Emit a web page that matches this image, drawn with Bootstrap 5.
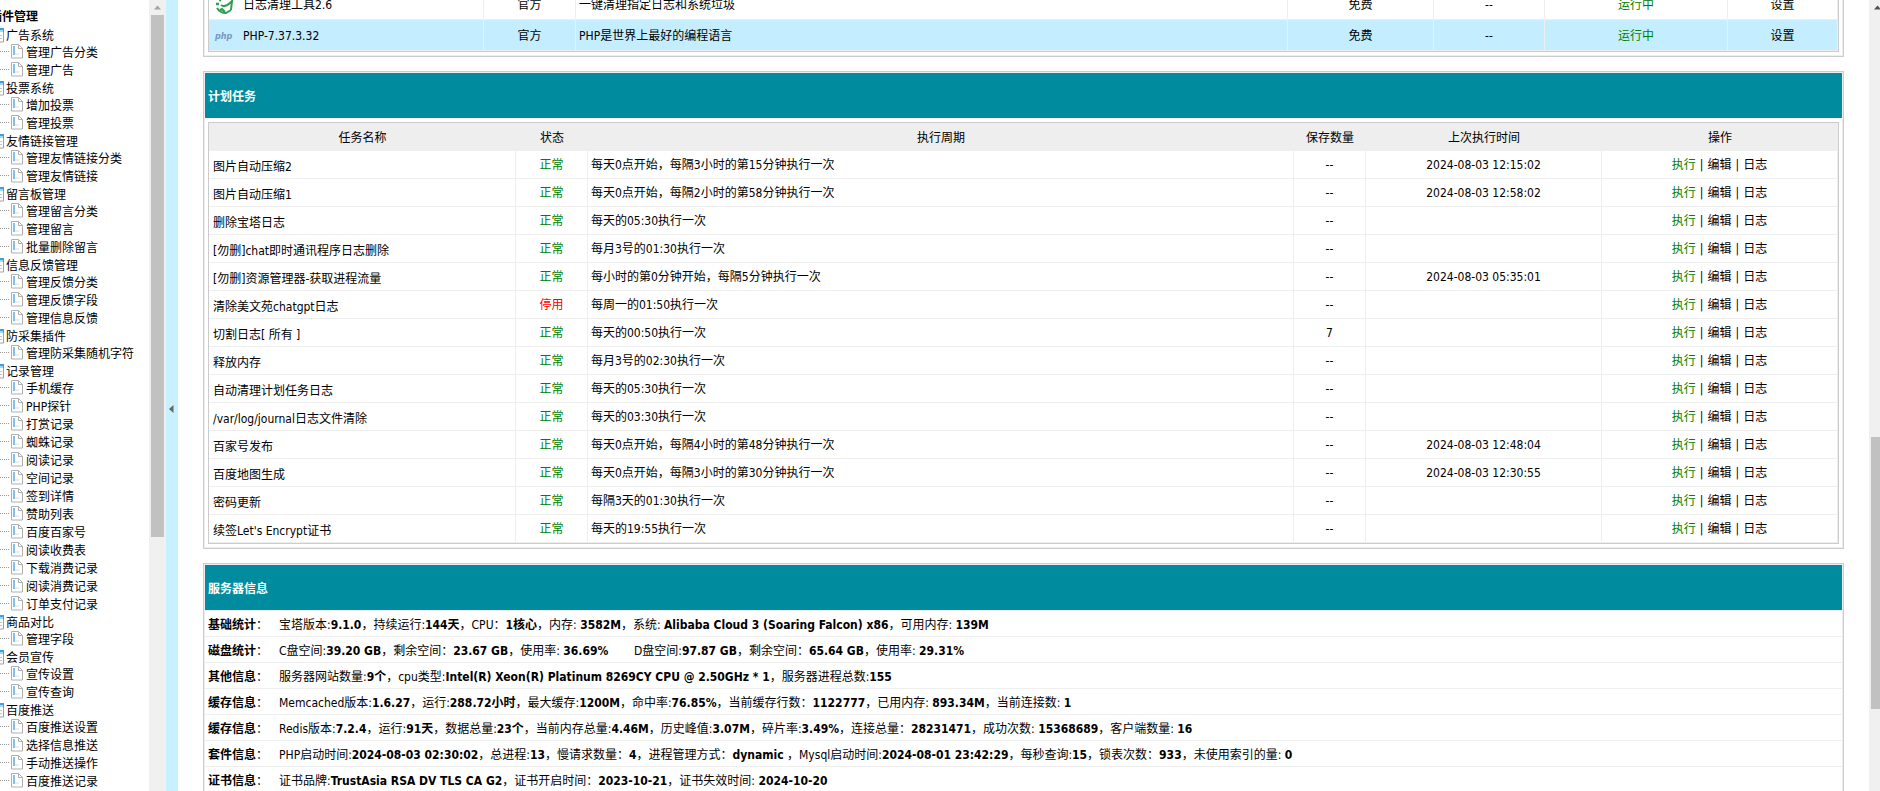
<!DOCTYPE html>
<html lang="zh-CN">
<head>
<meta charset="utf-8">
<meta name="viewport" content="width=device-width, initial-scale=1">
<title>后台管理</title>
<link href="https://cdn.jsdelivr.net/npm/bootstrap@5.3.0/dist/css/bootstrap.min.css" rel="stylesheet">
<style>
body{font-family:"DejaVu Sans Condensed","Noto Sans CJK SC",sans-serif;font-size:12px;line-height:18px;color:#000;background:#fff}
a{color:#000;text-decoration:none}
a:hover{text-decoration:underline}
/* tree menu */
.side{width:149px}
.tree{margin-left:-12px;white-space:nowrap}
.tree h1{font-size:12px;font-weight:700;line-height:18px;margin:0;padding:8px 0 1px 2px}
.tree ul{margin:0;padding:0;list-style:none}
.grp>span{display:flex;align-items:center;height:17px;gap:2px}
.grp li{display:flex;height:18px;align-items:center}
.grp li::before{content:"";width:21px;border-top:1px dotted #999;margin:0 2px 4px 0}
.grp li svg{margin:0 3px 3px 0}
/* scroll bars */
.bar-track{width:17px;background:#f0f0f0}
.bar-track svg{display:block;margin:4px auto 4px}
.bar-thumb{width:13px;margin:0 auto;background:#c1c1c1}
.page-bar{width:11px;padding-left:2px}
.page-bar svg{margin:4px 0 4px 2px}
.page-bar .bar-thumb{width:100%;margin-top:426px}
.splitter{width:12px;background:#c8f0ff;border:0;padding:26px 0 0}
.splitter svg{display:block;margin-left:3px}
/* panels */
.main-area{padding:0 25px}
.scrolled{margin-top:-18px}
.panel{border:1px solid #ccc;box-shadow:inset 0 0 0 1px #eee;padding:1px;margin-bottom:14px}
.panel-title{background:#008c9e;color:#fff;font-size:12px;font-weight:700;line-height:42px;margin:0;padding:3px 3px 0}
.panel-body{padding:4px 3px 3px}
.grid-table{width:100%;table-layout:fixed;border:1px solid #ccc;border-collapse:separate;border-spacing:0}
.grid-table th{background:#eee;font-weight:400;text-align:center;height:28px;padding:2px 0 0;line-height:18px}
.grid-table td{border-right:1px solid #eee;border-bottom:1px solid #eee;text-align:center;padding:5px 3px 4px;line-height:18px;white-space:nowrap}
.grid-table td:nth-child(3){text-align:left}
.tasks td:first-child{text-align:left;padding:7px 4px 2px}
.plugins td{padding:7px 3px 5px}
.plugins td:first-child{text-align:left;padding:2px 6px 0}
.plugins .hot td{background:#c4eeff}
.name-cell{gap:10px}
.name-cell>:first-child{width:18px;flex:none}
.php-mark{font:italic 700 9px/12px "DejaVu Sans Condensed",sans-serif;color:#7a96c2}
.ok{color:#008000}
.off{color:#f00}
.ops{gap:4px}
.info{margin:0}
.info>div{display:flex;border-top:1px solid #eee;line-height:18px;padding:5px 3px 2px;white-space:nowrap}
.info dt{width:71px;flex:none}
.info dt span{font-weight:400}
.info dd{margin:0;white-space:pre}
</style>
</head>
<body>
<svg class="d-none" xmlns="http://www.w3.org/2000/svg">
  <symbol id="page" viewBox="0 0 12 15">
    <path d="M.5.5h7l4 4v9.500H.5z" fill="#fff" stroke="#b0b0b0"/>
    <path d="M7.500.5v4h4" fill="none" stroke="#b0b0b0"/>
    <path d="M2 2h2v9H2z" fill="#84c0ec"/><path d="M4 9h4v2H4z" fill="#e8eef2"/>
  </symbol>
  <symbol id="win" viewBox="0 0 16 15">
    <path d="M.5.5h15v13.500H.5z" fill="#fff" stroke="#a0a0a0"/>
    <path d="M0 0h16v4H0z" fill="#3f9edb"/><path d="M1 2h14v2H1z" fill="#9fd8f8"/>
    <path d="M2 7.500h12M2 10.500h12" stroke="#c4c4c4"/>
  </symbol>
</svg>
<div class="d-flex vh-100 overflow-hidden">
  <nav class="side flex-shrink-0 overflow-hidden" aria-label="插件管理">
    <div class="tree">
      <h1>插件管理</h1>
      <div class="grp"><span><svg width="16" height="15"><use href="#win"/></svg>广告系统</span>
        <ul>
          <li><svg width="12" height="15"><use href="#page"/></svg><a href="#">管理广告分类</a></li>
          <li><svg width="12" height="15"><use href="#page"/></svg><a href="#">管理广告</a></li>
        </ul></div>
      <div class="grp"><span><svg width="16" height="15"><use href="#win"/></svg>投票系统</span>
        <ul>
          <li><svg width="12" height="15"><use href="#page"/></svg><a href="#">增加投票</a></li>
          <li><svg width="12" height="15"><use href="#page"/></svg><a href="#">管理投票</a></li>
        </ul></div>
      <div class="grp"><span><svg width="16" height="15"><use href="#win"/></svg>友情链接管理</span>
        <ul>
          <li><svg width="12" height="15"><use href="#page"/></svg><a href="#">管理友情链接分类</a></li>
          <li><svg width="12" height="15"><use href="#page"/></svg><a href="#">管理友情链接</a></li>
        </ul></div>
      <div class="grp"><span><svg width="16" height="15"><use href="#win"/></svg>留言板管理</span>
        <ul>
          <li><svg width="12" height="15"><use href="#page"/></svg><a href="#">管理留言分类</a></li>
          <li><svg width="12" height="15"><use href="#page"/></svg><a href="#">管理留言</a></li>
          <li><svg width="12" height="15"><use href="#page"/></svg><a href="#">批量删除留言</a></li>
        </ul></div>
      <div class="grp"><span><svg width="16" height="15"><use href="#win"/></svg>信息反馈管理</span>
        <ul>
          <li><svg width="12" height="15"><use href="#page"/></svg><a href="#">管理反馈分类</a></li>
          <li><svg width="12" height="15"><use href="#page"/></svg><a href="#">管理反馈字段</a></li>
          <li><svg width="12" height="15"><use href="#page"/></svg><a href="#">管理信息反馈</a></li>
        </ul></div>
      <div class="grp"><span><svg width="16" height="15"><use href="#win"/></svg>防采集插件</span>
        <ul>
          <li><svg width="12" height="15"><use href="#page"/></svg><a href="#">管理防采集随机字符</a></li>
        </ul></div>
      <div class="grp"><span><svg width="16" height="15"><use href="#win"/></svg>记录管理</span>
        <ul>
          <li><svg width="12" height="15"><use href="#page"/></svg><a href="#">手机缓存</a></li>
          <li><svg width="12" height="15"><use href="#page"/></svg><a href="#">PHP探针</a></li>
          <li><svg width="12" height="15"><use href="#page"/></svg><a href="#">打赏记录</a></li>
          <li><svg width="12" height="15"><use href="#page"/></svg><a href="#">蜘蛛记录</a></li>
          <li><svg width="12" height="15"><use href="#page"/></svg><a href="#">阅读记录</a></li>
          <li><svg width="12" height="15"><use href="#page"/></svg><a href="#">空间记录</a></li>
          <li><svg width="12" height="15"><use href="#page"/></svg><a href="#">签到详情</a></li>
          <li><svg width="12" height="15"><use href="#page"/></svg><a href="#">赞助列表</a></li>
          <li><svg width="12" height="15"><use href="#page"/></svg><a href="#">百度百家号</a></li>
          <li><svg width="12" height="15"><use href="#page"/></svg><a href="#">阅读收费表</a></li>
          <li><svg width="12" height="15"><use href="#page"/></svg><a href="#">下载消费记录</a></li>
          <li><svg width="12" height="15"><use href="#page"/></svg><a href="#">阅读消费记录</a></li>
          <li><svg width="12" height="15"><use href="#page"/></svg><a href="#">订单支付记录</a></li>
        </ul></div>
      <div class="grp"><span><svg width="16" height="15"><use href="#win"/></svg>商品对比</span>
        <ul>
          <li><svg width="12" height="15"><use href="#page"/></svg><a href="#">管理字段</a></li>
        </ul></div>
      <div class="grp"><span><svg width="16" height="15"><use href="#win"/></svg>会员宣传</span>
        <ul>
          <li><svg width="12" height="15"><use href="#page"/></svg><a href="#">宣传设置</a></li>
          <li><svg width="12" height="15"><use href="#page"/></svg><a href="#">宣传查询</a></li>
        </ul></div>
      <div class="grp"><span><svg width="16" height="15"><use href="#win"/></svg>百度推送</span>
        <ul>
          <li><svg width="12" height="15"><use href="#page"/></svg><a href="#">百度推送设置</a></li>
          <li><svg width="12" height="15"><use href="#page"/></svg><a href="#">选择信息推送</a></li>
          <li><svg width="12" height="15"><use href="#page"/></svg><a href="#">手动推送操作</a></li>
          <li><svg width="12" height="15"><use href="#page"/></svg><a href="#">百度推送记录</a></li>
        </ul></div>
    </div>
  </nav>
  <div class="bar-track flex-shrink-0" aria-hidden="true">
    <svg width="9" height="7" viewBox="0 0 9 7"><path d="M1 5.500h7L4.500 1.500z" fill="#a3a3a3"/></svg>
    <div class="bar-thumb" style="height:66%"></div>
  </div>
  <button type="button" class="splitter flex-shrink-0" aria-label="收起菜单">
    <svg width="5" height="8" viewBox="0 0 5 8"><path d="M4.500 0v8L0 4z" fill="#5c6a70"/></svg>
  </button>

  <main class="main-area flex-grow-1 overflow-hidden">
    <div class="scrolled">
      <section class="panel">
        <div class="panel-body">
          <table class="grid-table plugins">
            <colgroup><col style="width:275px"><col style="width:92px"><col><col style="width:146px"><col style="width:111px"><col style="width:183px"><col style="width:110px"></colgroup>
            <tbody>
              <tr><td><div class="name-cell d-flex align-items-center"><svg width="18" height="20" viewBox="0 0 18 20" fill="none" stroke="#2f9e4f" stroke-width="2"><path d="M6 10q4 3 9-2M15 8l2-2-1 9M2 13q3 5 9 5l5-3M5 15l2-1 3 3"/><path d="M1 9h3M4 5h2" stroke-width="2.500"/></svg><span>日志清理工具2.6</span></div></td><td>官方</td><td>一键清理指定日志和系统垃圾</td><td>免费</td><td>--</td><td class="ok">运行中</td><td><a href="#">设置</a></td></tr>
              <tr class="hot"><td><div class="name-cell d-flex align-items-center"><span class="php-mark">php</span><span>PHP-7.37.3.32</span></div></td><td>官方</td><td>PHP是世界上最好的编程语言</td><td>免费</td><td>--</td><td class="ok">运行中</td><td><a href="#">设置</a></td></tr>
            </tbody>
          </table>
        </div>
      </section>

      <section class="panel">
        <h2 class="panel-title">计划任务</h2>
        <div class="panel-body">
          <table class="grid-table tasks">
            <colgroup><col style="width:307px"><col style="width:72px"><col><col style="width:72px"><col style="width:236px"><col style="width:236px"></colgroup>
            <thead><tr><th>任务名称</th><th>状态</th><th>执行周期</th><th>保存数量</th><th>上次执行时间</th><th>操作</th></tr></thead>
            <tbody>
              <tr><td>图片自动压缩2</td><td class="ok">正常</td><td>每天0点开始，每隔3小时的第15分钟执行一次</td><td>--</td><td>2024-08-03 12:15:02</td><td><div class="ops d-flex justify-content-center"><a href="#" class="ok">执行</a><span>|</span><a href="#">编辑</a><span>|</span><a href="#">日志</a></div></td></tr>
              <tr><td>图片自动压缩1</td><td class="ok">正常</td><td>每天0点开始，每隔2小时的第58分钟执行一次</td><td>--</td><td>2024-08-03 12:58:02</td><td><div class="ops d-flex justify-content-center"><a href="#" class="ok">执行</a><span>|</span><a href="#">编辑</a><span>|</span><a href="#">日志</a></div></td></tr>
              <tr><td>删除宝塔日志</td><td class="ok">正常</td><td>每天的05:30执行一次</td><td>--</td><td></td><td><div class="ops d-flex justify-content-center"><a href="#" class="ok">执行</a><span>|</span><a href="#">编辑</a><span>|</span><a href="#">日志</a></div></td></tr>
              <tr><td>[勿删]chat即时通讯程序日志删除</td><td class="ok">正常</td><td>每月3号的01:30执行一次</td><td>--</td><td></td><td><div class="ops d-flex justify-content-center"><a href="#" class="ok">执行</a><span>|</span><a href="#">编辑</a><span>|</span><a href="#">日志</a></div></td></tr>
              <tr><td>[勿删]资源管理器-获取进程流量</td><td class="ok">正常</td><td>每小时的第0分钟开始，每隔5分钟执行一次</td><td>--</td><td>2024-08-03 05:35:01</td><td><div class="ops d-flex justify-content-center"><a href="#" class="ok">执行</a><span>|</span><a href="#">编辑</a><span>|</span><a href="#">日志</a></div></td></tr>
              <tr><td>清除美文苑chatgpt日志</td><td class="off">停用</td><td>每周一的01:50执行一次</td><td>--</td><td></td><td><div class="ops d-flex justify-content-center"><a href="#" class="ok">执行</a><span>|</span><a href="#">编辑</a><span>|</span><a href="#">日志</a></div></td></tr>
              <tr><td>切割日志[ 所有 ]</td><td class="ok">正常</td><td>每天的00:50执行一次</td><td>7</td><td></td><td><div class="ops d-flex justify-content-center"><a href="#" class="ok">执行</a><span>|</span><a href="#">编辑</a><span>|</span><a href="#">日志</a></div></td></tr>
              <tr><td>释放内存</td><td class="ok">正常</td><td>每月3号的02:30执行一次</td><td>--</td><td></td><td><div class="ops d-flex justify-content-center"><a href="#" class="ok">执行</a><span>|</span><a href="#">编辑</a><span>|</span><a href="#">日志</a></div></td></tr>
              <tr><td>自动清理计划任务日志</td><td class="ok">正常</td><td>每天的05:30执行一次</td><td>--</td><td></td><td><div class="ops d-flex justify-content-center"><a href="#" class="ok">执行</a><span>|</span><a href="#">编辑</a><span>|</span><a href="#">日志</a></div></td></tr>
              <tr><td>/var/log/journal日志文件清除</td><td class="ok">正常</td><td>每天的03:30执行一次</td><td>--</td><td></td><td><div class="ops d-flex justify-content-center"><a href="#" class="ok">执行</a><span>|</span><a href="#">编辑</a><span>|</span><a href="#">日志</a></div></td></tr>
              <tr><td>百家号发布</td><td class="ok">正常</td><td>每天0点开始，每隔4小时的第48分钟执行一次</td><td>--</td><td>2024-08-03 12:48:04</td><td><div class="ops d-flex justify-content-center"><a href="#" class="ok">执行</a><span>|</span><a href="#">编辑</a><span>|</span><a href="#">日志</a></div></td></tr>
              <tr><td>百度地图生成</td><td class="ok">正常</td><td>每天0点开始，每隔3小时的第30分钟执行一次</td><td>--</td><td>2024-08-03 12:30:55</td><td><div class="ops d-flex justify-content-center"><a href="#" class="ok">执行</a><span>|</span><a href="#">编辑</a><span>|</span><a href="#">日志</a></div></td></tr>
              <tr><td>密码更新</td><td class="ok">正常</td><td>每隔3天的01:30执行一次</td><td>--</td><td></td><td><div class="ops d-flex justify-content-center"><a href="#" class="ok">执行</a><span>|</span><a href="#">编辑</a><span>|</span><a href="#">日志</a></div></td></tr>
              <tr><td>续签Let's Encrypt证书</td><td class="ok">正常</td><td>每天的19:55执行一次</td><td>--</td><td></td><td><div class="ops d-flex justify-content-center"><a href="#" class="ok">执行</a><span>|</span><a href="#">编辑</a><span>|</span><a href="#">日志</a></div></td></tr>
            </tbody>
          </table>
        </div>
      </section>

      <section class="panel">
        <h2 class="panel-title">服务器信息</h2>
        <dl class="info">
          <div><dt>基础统计<span>：</span></dt><dd>宝塔版本:<b>9.1.0</b>，持续运行:<b>144天</b>，CPU：<b>1核心</b>，内存: <b>3582M</b>，系统: <b>Alibaba Cloud 3 (Soaring Falcon) x86</b>，可用内存: <b>139M</b></dd></div>
          <div><dt>磁盘统计<span>：</span></dt><dd>C盘空间:<b>39.20 GB</b>，剩余空间：<b>23.67 GB</b>，使用率: <b>36.69%</b>　    D盘空间:<b>97.87 GB</b>，剩余空间：<b>65.64 GB</b>，使用率: <b>29.31%</b></dd></div>
          <div><dt>其他信息<span>：</span></dt><dd>服务器网站数量:<b>9个</b>，cpu类型:<b>Intel(R) Xeon(R) Platinum 8269CY CPU @ 2.50GHz * 1</b>，服务器进程总数:<b>155</b></dd></div>
          <div><dt>缓存信息<span>：</span></dt><dd>Memcached版本:<b>1.6.27</b>，运行:<b>288.72小时</b>，最大缓存:<b>1200M</b>，命中率:<b>76.85%</b>，当前缓存行数：<b>1122777</b>，已用内存: <b>893.34M</b>，当前连接数: <b>1</b></dd></div>
          <div><dt>缓存信息<span>：</span></dt><dd>Redis版本:<b>7.2.4</b>，运行:<b>91天</b>，数据总量:<b>23个</b>，当前内存总量:<b>4.46M</b>，历史峰值:<b>3.07M</b>，碎片率:<b>3.49%</b>，连接总量：<b>28231471</b>，成功次数: <b>15368689</b>，客户端数量: <b>16</b></dd></div>
          <div><dt>套件信息<span>：</span></dt><dd>PHP启动时间:<b>2024-08-03 02:30:02</b>，总进程:<b>13</b>，慢请求数量：<b>4</b>，进程管理方式：<b>dynamic</b> ，Mysql启动时间:<b>2024-08-01 23:42:29</b>，每秒查询:<b>15</b>，锁表次数：<b>933</b>，未使用索引的量: <b>0</b></dd></div>
          <div><dt>证书信息<span>：</span></dt><dd>证书品牌:<b>TrustAsia RSA DV TLS CA G2</b>，证书开启时间：<b>2023-10-21</b>，证书失效时间: <b>2024-10-20</b></dd></div>
          <div><dt>&nbsp;</dt><dd></dd></div>
        </dl>
      </section>
    </div>
  </main>
  <div class="bar-track page-bar flex-shrink-0 overflow-hidden" aria-hidden="true">
    <svg width="9" height="7" viewBox="0 0 9 7"><path d="M1 5.500h7L4.500 1.500z" fill="#505050"/></svg>
    <div class="bar-thumb" style="height:272px"></div>
  </div>
</div>
<script src="https://cdn.jsdelivr.net/npm/bootstrap@5.3.0/dist/js/bootstrap.bundle.min.js"></script>
</body>
</html>
